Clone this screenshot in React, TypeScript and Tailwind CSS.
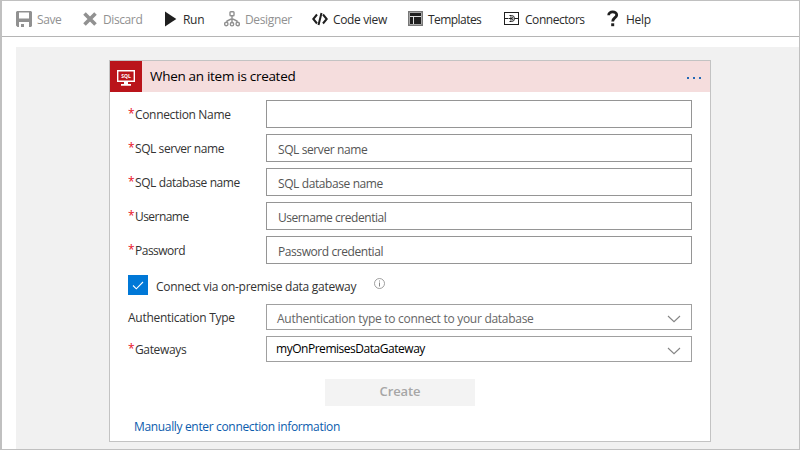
import type { ReactNode } from "react";

function ToolItem({ icon, label, width, slot, text }: { icon: ReactNode; label: string; width: string; slot: string; text: string }) {
  return (
    <div className={`flex h-full shrink-0 items-center ${width}`}>
      <div className={`flex shrink-0 ${slot}`}>{icon}</div>
      <span className={`text-[12px] leading-4 whitespace-nowrap ${text}`}>{label}</span>
    </div>
  );
}

function SaveIcon() {
  return (
    <svg width="16" height="16" viewBox="0 0 16 16" fill="#919191">
      <path fillRule="evenodd" d="M1 0h14l1 1v14l-1 1h-2v-5H3v5H1.500L0 14.500V1zM3 1.500v6h10v-6z" />
      <path d="M5 13h3v3H5z" />
    </svg>
  );
}

function DiscardIcon() {
  return (
    <svg width="14" height="14" viewBox="0 0 14 14" stroke="#919191" strokeWidth="3.6">
      <path d="M1.500 1.500l11 11M12.500 1.500l-11 11" />
    </svg>
  );
}

function RunIcon() {
  return (
    <svg width="12" height="16" viewBox="0 0 12 16" fill="#1f1f1f">
      <path d="M0 0.500L11.300 8L0 15.500z" />
    </svg>
  );
}

function DesignerIcon() {
  return (
    <svg width="16" height="16" viewBox="0 0 16 16" fill="none" stroke="#919191" strokeWidth="1.400">
      <rect x="6" y="0.800" width="4" height="4" rx="0.800" />
      <path d="M8 5v6M3 11V10L8 7.500L13 10v1" />
      <circle cx="2.300" cy="13" r="1.700" />
      <circle cx="8" cy="13.200" r="1.700" />
      <circle cx="13.700" cy="13" r="1.700" />
    </svg>
  );
}

function CodeIcon() {
  return (
    <svg width="16" height="14" viewBox="0 0 16 14" fill="none" stroke="#1f1f1f" strokeWidth="2">
      <path d="M5 2.500L1.300 7L5 11.500M11 2.500L14.700 7L11 11.500M9.500 1L6.500 13" />
    </svg>
  );
}

function TemplatesIcon() {
  return (
    <svg width="16" height="16" viewBox="0 0 16 16">
      <path fill="#777" d="M0 0h15v15H0z" />
      <path fill="#ddd" d="M1.500 1.500h12v12h-12z" />
      <path fill="#1f1f1f" d="M2 2h11v3H2zM2 6h3v7H2zM6 6h7v7H6z" />
    </svg>
  );
}

function ConnectorsIcon() {
  return (
    <svg width="15" height="14" viewBox="0 0 15 14" fill="none" stroke="#1f1f1f">
      <rect x="0.500" y="0.500" width="14" height="12" />
      <path d="M0.500 6.500h4M10.500 6.500h4M5.500 3.500h2a3 3 0 0 1 0 6h-2M5 6.500h3M6 5.100h1.500a1.400 1.400 0 0 1 0 2.800H6" />
    </svg>
  );
}

function HelpIcon() {
  return (
    <svg width="12" height="17" viewBox="0 0 12 17" fill="none" stroke="#1f1f1f" strokeWidth="2.800">
      <path d="M1.700 5.200C1.500 .9 9.700.7 9.700 4.900C9.700 7.700 5.700 7.500 5.700 11.500" />
      <path d="M4.200 13.300h3v2.900h-3z" fill="#1f1f1f" stroke="none" />
    </svg>
  );
}

function SqlIcon() {
  return (
    <svg width="18" height="18" viewBox="0 0 18 18">
      <path fill="none" stroke="#fff" strokeWidth="1.400" d="M.7 1.700h16.600v10.600H.7z" />
      <path fill="#fff" d="M7 12.500h4V15h3v1.700H4V15h3z" />
      <text x="9" y="8.900" textAnchor="middle" fill="#fff" fontSize="5" fontWeight="700" fontFamily="Open Sans, sans-serif">SQL</text>
    </svg>
  );
}

function Label({ text, required = true, tracking }: { text: string; required?: boolean; tracking: string }) {
  return (
    <div className="flex w-[138px] shrink-0 pt-0.5 text-[12px] leading-4 whitespace-nowrap text-[#333]">
      {required && <span className="-mt-px w-[7px] text-[12px] text-[#e81123]">*</span>}
      <span className={tracking}>{text}</span>
    </div>
  );
}

function Field({ label, placeholder, tracking, hint }: { label: string; placeholder: string; tracking: string; hint: string }) {
  return (
    <div className="flex items-center">
      <Label text={label} tracking={tracking} />
      <div className="flex h-7 w-[426px] items-center border border-[#959595] pt-[3px] pl-[11px] text-[12px] leading-4 text-[#555]">
        <span className={hint}>{placeholder}</span>
      </div>
    </div>
  );
}

function Chevron() {
  return (
    <svg className="mt-[3px]" width="14" height="8" viewBox="0 0 14 8" fill="none" stroke="#858585" strokeWidth="1.100">
      <path d="M1 1l6 5.700L13 1" />
    </svg>
  );
}

export default function App() {
  return (
    <div className="flex h-[450px] w-[800px] flex-col overflow-hidden border border-l-2 border-[#c0c0c0] bg-white font-['Open_Sans','Noto_Sans',sans-serif]">
      <header className="flex h-9 shrink-0 items-center border-b border-[#b5b5b5] pl-3.5 text-[#2b2b2b]">
        <ToolItem icon={<SaveIcon />} label="Save" width="w-[67px]" slot="w-[21px]" text="pt-0.5 text-[#919191] tracking-[-0.4px]" />
        <ToolItem icon={<DiscardIcon />} label="Discard" width="w-[82px]" slot="w-5" text="pt-0.5 text-[#919191] tracking-[-0.4px]" />
        <ToolItem icon={<RunIcon />} label="Run" width="w-[59px]" slot="w-[18px]" text="pt-0.5 tracking-[-0.3px]" />
        <ToolItem icon={<DesignerIcon />} label="Designer" width="w-[88px]" slot="w-[21px]" text="pt-0.5 text-[#919191] tracking-[-0.35px]" />
        <ToolItem icon={<CodeIcon />} label="Code view" width="w-24" slot="w-[21px]" text="pt-0.5 tracking-[-0.35px]" />
        <ToolItem icon={<TemplatesIcon />} label="Templates" width="w-24" slot="w-[21px]" text="-ml-px pt-0.5 tracking-[-0.55px]" />
        <ToolItem icon={<ConnectorsIcon />} label="Connectors" width="w-[103px]" slot="w-[21px]" text="pt-[3px] tracking-[-0.45px]" />
        <ToolItem icon={<HelpIcon />} label="Help" width="w-[60px]" slot="w-[19px]" text="pt-[3px] tracking-[-0.3px]" />
      </header>
      <main className="mt-2.5 ml-3.5 flex-1 bg-[#f1f1f1] pt-[13px] pl-[93px]">
        <section className="h-[382px] w-[602px] border border-[#c3c3c3] bg-white">
          <div className="flex h-[31px] items-center bg-[#f5dddd]">
            <div className="flex h-full w-8 items-center justify-center bg-[#ba141a] pt-0.5"><SqlIcon /></div>
            <h1 className="ml-2 flex-1 pb-0.5 text-[13.500px] leading-4 tracking-[-0.3px] text-black">When an item is created</h1>
            <div className="mt-[3px] mr-[9px] flex gap-1">
              <span className="size-0.5 bg-[#2569b5]" />
              <span className="size-0.5 bg-[#2569b5]" />
              <span className="size-0.5 bg-[#2569b5]" />
            </div>
          </div>
          <div className="flex flex-col gap-1.5 pt-2 pl-[18px]">
            <Field label="Connection Name" placeholder="" tracking="tracking-[-0.33px]" hint="" />
            <Field label="SQL server name" placeholder="SQL server name" tracking="tracking-[-0.42px]" hint="tracking-[-0.4px]" />
            <Field label="SQL database name" placeholder="SQL database name" tracking="tracking-[-0.4px]" hint="tracking-[-0.4px]" />
            <Field label="Username" placeholder="Username credential" tracking="tracking-[-0.55px]" hint="tracking-[-0.45px]" />
            <Field label="Password" placeholder="Password credential" tracking="tracking-[-0.5px]" hint="tracking-[-0.42px]" />
          </div>
          <div className="mt-[11px] flex h-5 pl-[18px]">
            <div className="flex size-5 items-center justify-center bg-[#0078d7]">
              <svg width="12" height="9" viewBox="0 0 12 9" fill="none" stroke="#fff" strokeWidth="1.100"><path d="M1 4.500l3.300 3.300L11 1" /></svg>
            </div>
            <span className="ml-2 w-[218px] pt-1 text-[12px] leading-4 tracking-[-0.27px] whitespace-nowrap text-[#333]">Connect via on-premise data gateway</span>
            <svg className="mt-[3px]" width="11" height="11" viewBox="0 0 11 11" fill="none" stroke="#888"><circle cx="5.500" cy="5.500" r="5" strokeWidth=".8" /><path d="M5.500 4.500V8.500M5.500 2.500v1" /></svg>
          </div>
          <div className="mt-[9px] flex flex-col gap-1.5 pl-[18px]">
            <div className="flex items-center">
              <Label text="Authentication Type" required={false} tracking="tracking-[-0.28px]" />
              <div className="flex h-[26px] w-[426px] items-center justify-between border border-[#a0a0a0] pr-[10px] pl-2.5 text-[12px] leading-4 text-[#666]">
                <span className="pt-1 tracking-[-0.28px]">Authentication type to connect to your database</span>
                <Chevron />
              </div>
            </div>
            <div className="flex items-center">
              <Label text="Gateways" tracking="tracking-[-0.35px]" />
              <div className="flex h-[26px] w-[426px] items-center justify-between border border-[#a0a0a0] pr-[10px] pl-[9px] text-[12px] leading-4 text-black">
                <span className="tracking-[-0.47px]">myOnPremisesDataGateway</span>
                <Chevron />
              </div>
            </div>
          </div>
          <div className="mt-[17px] ml-[215px] flex h-[27px] w-[150px] items-center justify-center bg-[#f3f3f3] pb-[3px] text-[13px] leading-4 font-semibold tracking-[-0.1px] text-[#a6a6a6]">Create</div>
          <a className="mt-[13px] ml-6 block text-[12px] leading-4 tracking-[-0.34px] text-[#0b5cad]">Manually enter connection information</a>
        </section>
      </main>
    </div>
  );
}
